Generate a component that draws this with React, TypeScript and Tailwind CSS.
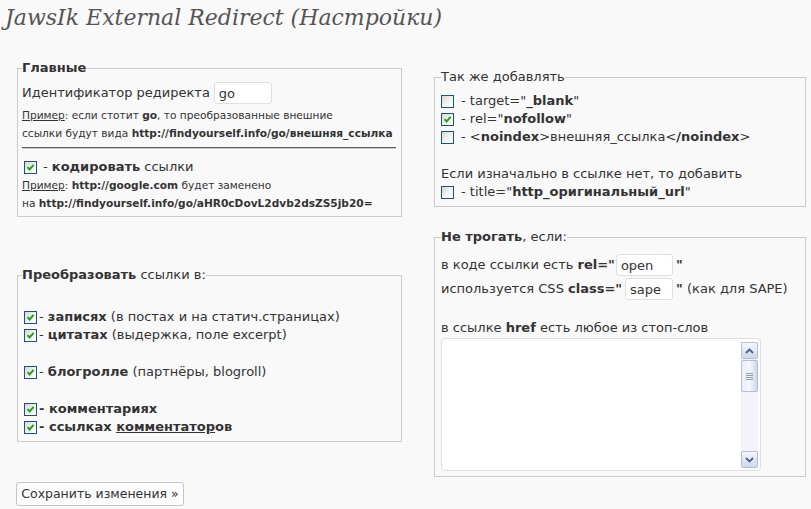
import React from 'react';

function Box({ checked }: { checked?: boolean }) {
  return (
    <span className="inline-flex w-[13px] h-[13px] shrink-0 border border-[#1c5180] bg-linear-to-br from-[#d8d8d0] via-[#f1f1ee] to-white items-center justify-center">
      {checked && (
        <svg width="9" height="9" viewBox="0 0 9 9">
          <path d="M1.5 4.2 L3.6 6.5 L7.6 1.8" stroke="#21a121" strokeWidth="2" fill="none" />
        </svg>
      )}
    </span>
  );
}

function Arrow({ up }: { up?: boolean }) {
  return (
    <div className="h-[17px] w-[17px] rounded-[2px] border border-[#b2bfd8] bg-linear-to-b from-[#f4f6fb] to-[#cfd8ec] flex items-center justify-center">
      <svg width="9" height="6" viewBox="0 0 9 6">
        <path d={up ? 'M1 5 L4.5 1.5 L8 5' : 'M1 1 L4.5 4.5 L8 1'} stroke="#4d6185" strokeWidth="1.8" fill="none" />
      </svg>
    </div>
  );
}

export default function App() {
  return (
    <div className="min-h-[509px] bg-[#f9f9f9] text-[#333] text-[13px] leading-[18px] font-['DejaVu_Sans',Verdana,sans-serif]">
      {/* Title */}
      <h2 className="h-[59px] pl-[5px] pt-[4px] text-[22px] leading-[28px] italic text-[#555] font-['DejaVu_Serif',Georgia,serif]">
        JawsIk External Redirect (Настройки)
      </h2>

      <div className="grid grid-cols-[385px_372px] gap-x-[32px] pl-[17px]">
        {/* Left column */}
        <div className="flex flex-col items-start">
          <fieldset className="w-[385px] border border-[#ccc] pl-[4px] pr-[5px] pb-[4px]">
            <legend className="font-bold leading-[18px]">Главные</legend>
            <div className="mt-[3px] h-[26px] flex items-center">
              Идентификатор редиректа
              <input
                defaultValue="go"
                className="ml-[4px] w-[58px] h-[22px] bg-white border border-[#dfdfdf] rounded-[3px] px-[4px] text-[13px] outline-none"
              />
            </div>
            <div className="text-[10.6px] whitespace-nowrap">
              <u>Пример</u>: если стотит <b>go</b>, то преобразованные внешние
            </div>
            <div className="text-[10.6px] whitespace-nowrap">
              ссылки будут вида <b>http://findyourself.info/go/внешняя_ссылка</b>
            </div>
            <div className="mt-[5px] mb-[9px] h-[2px] bg-[#5e5e5e] border-b border-[#ccc]" />
            <div className="flex items-center gap-[6px] ml-[2px]">
              <Box checked />
              <span>
                - <b>кодировать</b> ссылки
              </span>
            </div>
            <div className="text-[10.6px] whitespace-nowrap">
              <u>Пример</u>: <b>http://google.com</b> будет заменено
            </div>
            <div className="text-[10.6px] whitespace-nowrap">
              на <b>http://findyourself.info/go/aHR0cDovL2dvb2dsZS5jb20=</b>
            </div>
          </fieldset>

          <fieldset className="mt-[49px] w-[385px] border border-[#ccc] pl-[4px] pr-[5px] pb-[5px]">
            <legend>
              <b>Преобразовать</b> ссылки в:
            </legend>
            <div className="mt-[24px] flex flex-col ml-[2px]">
              <div className="flex items-center gap-[2px]">
                <Box checked />
                <span>
                  - <b>записях</b> (в постах и на статич.страницах)
                </span>
              </div>
              <div className="flex items-center gap-[2px]">
                <Box checked />
                <span>
                  - <b>цитатах</b> (выдержка, поле excerpt)
                </span>
              </div>
              <div className="mt-[19px] flex items-center gap-[2px]">
                <Box checked />
                <span>
                  - <b>блогролле</b> (партнёры, blogroll)
                </span>
              </div>
              <div className="mt-[19px] flex items-center gap-[2px]">
                <Box checked />
                <b>- комментариях</b>
              </div>
              <div className="flex items-center gap-[2px]">
                <Box checked />
                <b>
                  - ссылках <u>комментатор</u>ов
                </b>
              </div>
            </div>
          </fieldset>

          <button className="mt-[40px] -ml-px h-[24px] w-[168px] px-[3px] whitespace-nowrap bg-[#fcfcfc] border border-[#c4c4c4] rounded-[3px] text-[12.5px] text-[#333]">
            Сохранить изменения »
          </button>
        </div>

        {/* Right column */}
        <div className="flex flex-col">
          <fieldset className="mt-[9px] w-[372px] border border-[#ccc] pl-[6px] pr-[5px] pb-[5px]">
            <legend>Так же добавлять</legend>
            <div className="mt-[6px]">
              <div className="flex items-center gap-[7px]">
                <Box />
                <span>
                  - target="<b>_blank</b>"
                </span>
              </div>
              <div className="flex items-center gap-[7px]">
                <Box checked />
                <span>
                  - rel="<b>nofollow</b>"
                </span>
              </div>
              <div className="flex items-center gap-[7px]">
                <Box />
                <span>
                  - &lt;<b>noindex</b>&gt;внешняя_ссылка&lt;<b>/noindex</b>&gt;
                </span>
              </div>
              <div className="mt-[19px]">Если изначально в ссылке нет, то добавить</div>
              <div className="flex items-center gap-[7px]">
                <Box />
                <span>
                  - title="<b>http_оригинальный_url</b>"
                </span>
              </div>
            </div>
          </fieldset>

          <fieldset className="mt-[21px] w-[372px] border border-[#ccc] pl-[6px] pr-[5px] pb-[5px]">
            <legend>
              <b>Не трогать</b>, если:
            </legend>
            <div className="mt-[7px] h-[24px] flex items-center">
              в коде ссылки есть&nbsp;<b>rel="</b>
              <input
                defaultValue="open"
                className="ml-[1px] w-[57px] h-[22px] bg-white border border-[#dfdfdf] rounded-[3px] px-[4px] text-[13px] outline-none"
              />
              <b className="ml-[3px]">"</b>
            </div>
            <div className="h-[24px] flex items-center">
              используется CSS&nbsp;<b>class="</b>
              <input
                defaultValue="sape"
                className="ml-[3px] w-[48px] h-[22px] bg-white border border-[#dfdfdf] rounded-[3px] px-[4px] text-[13px] outline-none"
              />
              <b className="ml-[3px]">"</b>&nbsp;(как для SAPE)
            </div>
            <div className="mt-[18px]">
              в ссылке <b>href</b> есть любое из стоп-слов
            </div>
            <div className="mt-[1px] w-[320px] h-[133px] bg-white border border-[#dfdfdf] rounded-[4px] flex justify-end pt-[3px] pr-[2px] pb-[2px]">
              <div className="w-[17px] h-[126px] bg-[#f3f3f9] flex flex-col">
                <Arrow up />
                <div className="mt-[1px] h-[32px] w-[17px] rounded-[2px] border border-[#b2bfd8] bg-linear-to-r from-[#e9edf7] via-[#f7f8fc] to-[#cdd6ea] flex flex-col items-center justify-center gap-[1px]">
                  <div className="w-[7px] h-px bg-[#8c9bb8]" />
                  <div className="w-[7px] h-px bg-[#8c9bb8]" />
                  <div className="w-[7px] h-px bg-[#8c9bb8]" />
                  <div className="w-[7px] h-px bg-[#8c9bb8]" />
                </div>
                <div className="flex-1" />
                <Arrow />
              </div>
            </div>
          </fieldset>
        </div>
      </div>
    </div>
  );
}
